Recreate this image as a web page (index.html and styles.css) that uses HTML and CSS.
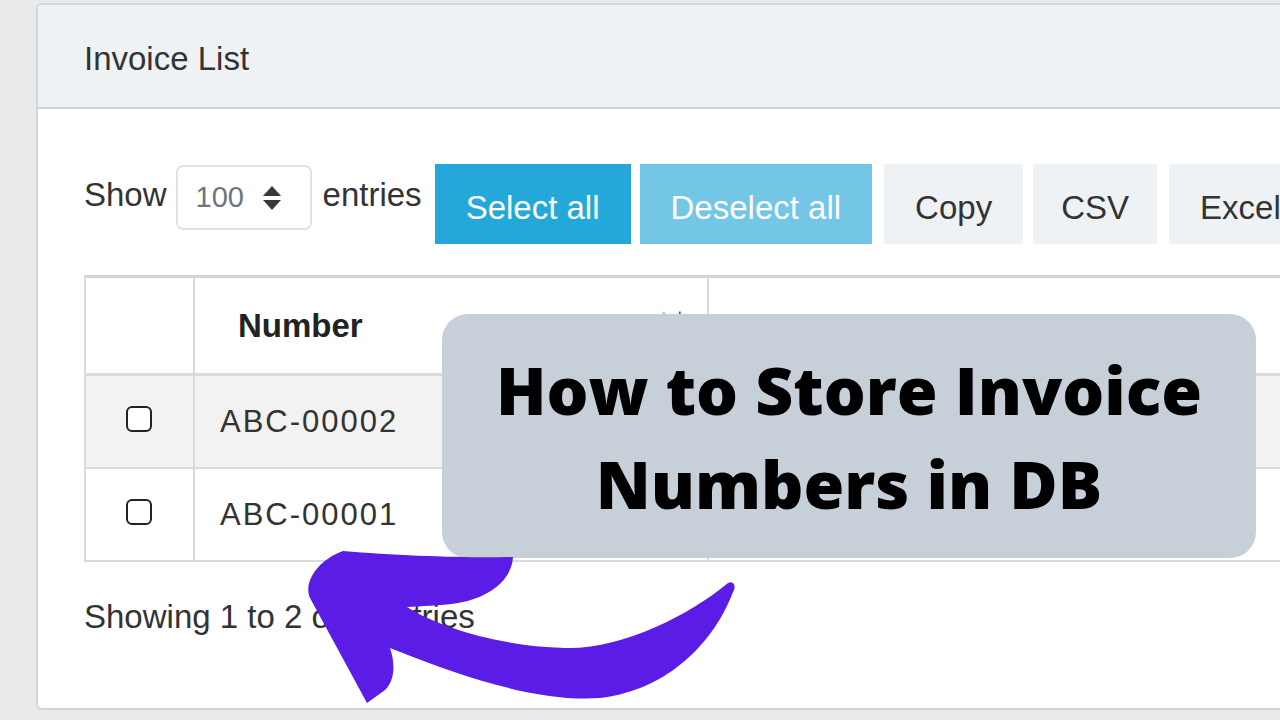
FILE: index.html
```html
<!DOCTYPE html>
<html lang="en">
<head>
    <meta charset="UTF-8"/>
    <meta name="viewport" content="width=device-width, initial-scale=1"/>
    <title>Invoice List</title>
    <link rel="stylesheet" href="styles.css">
</head>
<body>

<div class="card">
    <div class="card-header">Invoice List</div>
    <div class="card-body">

        <!-- length menu + buttons -->
        <div class="toolbar">
            <span class="label">Show</span>
            <div class="length-select">
                <span>100</span>
                <svg class="updown" viewBox="0 0 20 26" aria-hidden="true">
                    <path d="M10 1 L19 11 L1 11 Z"/>
                    <path d="M10 25 L19 15 L1 15 Z"/>
                </svg>
            </div>
            <span class="label">entries</span>
            <button class="btn btn-primary">Select all</button>
            <button class="btn btn-light-primary">Deselect all</button>
            <button class="btn btn-plain">Copy</button>
            <button class="btn btn-plain btn-narrow">CSV</button>
            <button class="btn btn-plain">Excel</button>
        </div>

        <table class="invoice-table">
            <colgroup>
                <col class="w-check">
                <col class="w-number">
                <col>
            </colgroup>
            <thead>
            <tr>
                <th class="col-check"></th>
                <th class="col-number sorting sorted-desc">Number</th>
                <th class="sorting"></th>
            </tr>
            </thead>
            <tbody>
            <tr class="odd">
                <td class="col-check"><input type="checkbox" class="row-check"></td>
                <td class="cell-number">ABC-00002</td>
                <td></td>
            </tr>
            <tr>
                <td class="col-check"><input type="checkbox" class="row-check"></td>
                <td class="cell-number">ABC-00001</td>
                <td></td>
            </tr>
            </tbody>
        </table>

        <div class="table-info">Showing 1 to 2 of 2 entries</div>
    </div>
</div>

<!-- Title overlay -->
<div class="title-box">
    <div>How to Store Invoice<br>Numbers in DB</div>
</div>

<!-- Purple arrow -->
<svg class="arrow" viewBox="0 0 1280 720" aria-hidden="true">
    <path d="M343 551
             C400 556 470 558 513 557
             C512 578 492 597 458 603
             C440 606 420 606 407 607
             C440 628 500 646 565 648
             C620 650 690 615 728 583
             C735 580 736 588 733 592
             C715 640 670 690 600 698
             C540 702 470 680 390 648
             C396 665 394 682 385 690
             L367 703
             L310 598
             C303 582 318 560 343 551 Z"/>
</svg>

</body>
</html>
```

FILE: styles.css
```css
body {
  margin: 0;
  overflow: hidden;
  background: #e9eaec;
  font-family: "Liberation Sans", Arial, sans-serif;
  color: #333;
  position: relative;
  width: 1280px;
  height: 720px;
}

.card {
  margin: 3px 0 0 36px;
  width: 1400px;
  height: 707px;
  box-sizing: border-box;
  border: 2px solid #d4d7da;
  border-radius: 6px;
  background: #fff;
  overflow: hidden;
}
.card-header {
  height: 104px;
  box-sizing: border-box;
  display: flex;
  align-items: center;
  padding: 5px 0 0 46px;
  background: #eef2f5;
  border-bottom: 2px solid #cfd3d7;
  font-size: 33px;
  color: #333;
}
.card-body {
  padding: 55px 46px 0;
}

/* toolbar */
.toolbar {
  display: flex;
  align-items: flex-start;
  height: 80px;
  font-size: 33px;
}
.toolbar .label {
  margin-top: 12px;
  line-height: 38px;
}
.length-select {
  width: 136px;
  height: 65px;
  box-sizing: border-box;
  margin: 1px 11px 0 9px;
  padding: 0 28px 0 18px;
  border: 2px solid #e0e3e6;
  border-radius: 7px;
  display: flex;
  align-items: center;
  justify-content: space-between;
  font-size: 29px;
  color: #6c757d;
}
.updown {
  width: 20px;
  height: 26px;
  fill: #343a40;
}
.btn {
  height: 80px;
  border: none;
  margin-left: 9px;
  padding: 7px 31px 0;
  font-family: inherit;
  font-size: 33px;
  cursor: pointer;
}
.toolbar .label + .btn {
  margin-left: 13px;
}
.btn-primary {
  background: #24a8da;
  color: #fff;
}
.btn-light-primary {
  background: #74c6e6;
  color: #fff;
}
.btn-plain {
  background: #eff2f5;
  color: #333;
  margin-left: 12px;
}
.btn-narrow {
  margin-left: 10px;
  padding: 7px 28px 0;
}

/* table */
.invoice-table {
  margin-top: 31px;
  width: 1304px;
  table-layout: fixed;
  border-collapse: collapse;
  border-top: 3px solid #d3d6d9;
  font-size: 31px;
}
.w-check {
  width: 109px;
}
.w-number {
  width: 514px;
}
.invoice-table th,
.invoice-table td {
  border: 2px solid #d8dbde;
  text-align: left;
  padding: 0 25px;
}
.invoice-table th {
  height: 95px;
  border-bottom-width: 3px;
  font-size: 33px;
  font-weight: bold;
  color: #222;
  position: relative;
}
.invoice-table td {
  height: 91px;
}
.invoice-table tr.odd td {
  background: #f2f2f2;
}
.invoice-table .col-check {
  text-align: center;
  padding: 0;
}
.invoice-table .col-number {
  padding-left: 43px;
}
.cell-number {
  letter-spacing: 2px;
  color: #333;
}

/* sort arrows */
.sorting::before,
.sorting::after {
  position: absolute;
  top: 24px;
  font-size: 28px;
  font-weight: normal;
  color: #bbb;
}
.sorting::before {
  content: "\2191";
  right: 36px;
}
.sorting::after {
  content: "\2193";
  right: 20px;
}
.sorted-desc::after {
  color: #111;
}

.row-check {
  appearance: none;
  -webkit-appearance: none;
  width: 26px;
  height: 26px;
  margin: 0 1px 8px 0;
  border: 2px solid #222;
  border-radius: 6px;
  background: #fff;
  vertical-align: middle;
}

.table-info {
  margin-top: 36px;
  font-size: 33px;
  color: #333;
}

/* overlays */
.title-box {
  position: absolute;
  left: 442px;
  top: 314px;
  width: 814px;
  height: 244px;
  border-radius: 26px;
  background: #c7cfd8;
  display: flex;
  align-items: center;
  justify-content: center;
  text-align: center;
  font-family: "Open Sans", sans-serif;
  font-weight: 800;
  font-size: 66px;
  line-height: 94px;
  color: #000;
}
.arrow {
  position: absolute;
  left: 0;
  top: 0;
  width: 1280px;
  height: 720px;
  fill: #5b1ce6;
  pointer-events: none;
}
```
